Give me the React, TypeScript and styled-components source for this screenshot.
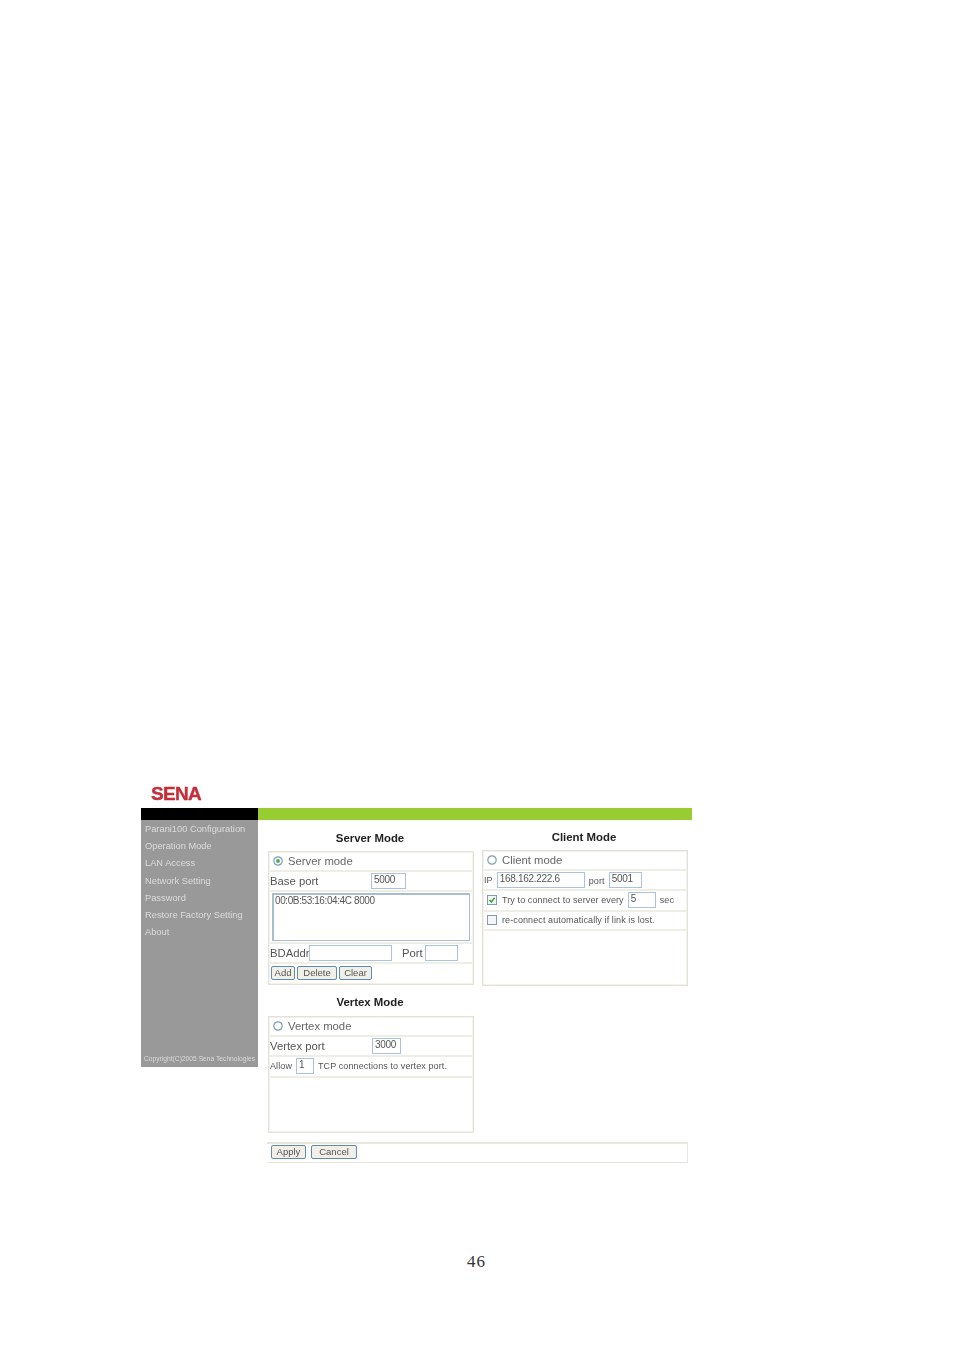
import React from 'react'
import styled, { createGlobalStyle } from 'styled-components'

const Global = createGlobalStyle`
  html,body{margin:0;padding:0;background:#fff;}
  body{font-family:"Liberation Sans",Arial,sans-serif;color:#555;}
`

const menu = [
  'Parani100 Configuration',
  'Operation Mode',
  'LAN Access',
  'Network Setting',
  'Password',
  'Restore Factory Setting',
  'About',
]

export default function App() {
  return <>
    <Global />
    <Page>
      <Shot>
        <Logo>SENA</Logo>
        <Bars>
          <BlackBar />
          <GreenBar />
        </Bars>
        <Body>
          <Sidebar>
            <Menu>
              {menu.map(m => <MenuItem key={m}>{m}</MenuItem>)}
            </Menu>
            <Copy>Copyright(C)2005 Sena Technologies</Copy>
          </Sidebar>
          <Main>
            <Columns>
              <Column>
                <Title>Server Mode</Title>
                <Panel>
                  <Row h={19}>
                    <Radio checked />
                    <BigLabel>Server mode</BigLabel>
                  </Row>
                  <Row h={20}>
                    <FieldLabel w={101}>Base port</FieldLabel>
                    <Input w={35}>5000</Input>
                  </Row>
                  <ListRow>
                    <ListBox>00:0B:53:16:04:4C 8000</ListBox>
                  </ListRow>
                  <Row h={20}>
                    <FieldLabel w={39}>BDAddr</FieldLabel>
                    <Input w={83} />
                    <PortLabel>Port</PortLabel>
                    <Input w={33} />
                  </Row>
                  <ButtonRow>
                    <Button w={24}>Add</Button>
                    <Button w={40}>Delete</Button>
                    <Button w={33}>Clear</Button>
                  </ButtonRow>
                </Panel>
                <VertexTitle>Vertex Mode</VertexTitle>
                <Panel>
                  <Row h={19}>
                    <Radio />
                    <BigLabel>Vertex mode</BigLabel>
                  </Row>
                  <Row h={20}>
                    <FieldLabel w={102}>Vertex port</FieldLabel>
                    <Input w={29}>3000</Input>
                  </Row>
                  <Row h={21}>
                    <SmallLabel>Allow</SmallLabel>
                    <Input w={18}>1</Input>
                    <TailLabel>TCP connections to vertex port.</TailLabel>
                  </Row>
                  <Filler h={53} />
                </Panel>
              </Column>
              <Column>
                <ClientTitle>Client Mode</ClientTitle>
                <Panel>
                  <Row h={19}>
                    <Radio />
                    <BigLabel>Client mode</BigLabel>
                  </Row>
                  <Row h={20}>
                    <SmallLabel>IP</SmallLabel>
                    <Input w={88}>168.162.222.6</Input>
                    <PortSmall>port</PortSmall>
                    <Input w={33}>5001</Input>
                  </Row>
                  <Row h={21}>
                    <Check checked />
                    <SmallLabel>Try to connect to server every</SmallLabel>
                    <Input w={28}>5</Input>
                    <TailLabel>sec</TailLabel>
                  </Row>
                  <Row h={19}>
                    <Check />
                    <SmallLabel>re-connect automatically if link is lost.</SmallLabel>
                  </Row>
                  <Filler h={53} />
                </Panel>
              </Column>
            </Columns>
            <Footer>
              <Button w={35}>Apply</Button>
              <FooterGap />
              <Button w={46}>Cancel</Button>
            </Footer>
          </Main>
        </Body>
      </Shot>
      <PageNumber>46</PageNumber>
    </Page>
  </>
}

function Radio({ checked }: { checked?: boolean }) {
  return <RadioMark width="10" height="10" viewBox="0 0 10 10">
    <circle cx="5" cy="5" r="4.2" fill="#fff" stroke="#7f9db9" strokeWidth="1.2" />
    {checked && <circle cx="5" cy="5" r="2" fill="#4fae5a" />}
  </RadioMark>
}

function Check({ checked }: { checked?: boolean }) {
  return <CheckMark width="10" height="10" viewBox="0 0 10 10">
    <rect x="0.5" y="0.5" width="9" height="9" fill="#f4f6f8" stroke="#7f9db9" />
    {checked && <path d="M2.5 5 L4.3 7 L7.6 2.8" fill="none" stroke="#3da63d" strokeWidth="1.5" />}
  </CheckMark>
}

const Page = styled.div`
  box-sizing:border-box;
  width:954px;
  height:1351px;
  padding:784px 0 0 141px;
  overflow:hidden;
`
const Shot = styled.div`
  width:551px;
  filter:blur(0.35px);
`
const Logo = styled.div`
  height:24px;
  line-height:19px;
  padding-left:10px;
  font-size:19px;
  font-weight:bold;
  letter-spacing:-0.7px;
  -webkit-text-stroke:0.4px #c4303a;
  color:#c4303a;
`
const Bars = styled.div`
  display:flex;
  height:12px;
`
const BlackBar = styled.div`
  width:117px;
  background:#000;
`
const GreenBar = styled.div`
  flex:1;
  background:#97cc32;
`
const Body = styled.div`
  display:flex;
  align-items:flex-start;
`
const Sidebar = styled.div`
  box-sizing:border-box;
  width:117px;
  height:247px;
  padding:0 0 3px 4px;
  background:#999;
  display:flex;
  flex-direction:column;
  justify-content:space-between;
`
const Menu = styled.div`
  display:flex;
  flex-direction:column;
`
const MenuItem = styled.div`
  height:17.2px;
  line-height:19px;
  font-size:9.3px;
  color:#dcdcdc;
  white-space:nowrap;
`
const Copy = styled.div`
  font-size:6.7px;
  line-height:10px;
  margin-left:-1px;
  color:#dcdcdc;
  white-space:nowrap;
`
const Main = styled.div`
  flex:1;
  padding-left:9px;
`
const Columns = styled.div`
  display:flex;
  gap:8px;
  padding-left:1px;
  align-items:flex-start;
`
const Column = styled.div`
  width:206px;
  display:flex;
  flex-direction:column;
`
const Title = styled.div`
  height:31px;
  line-height:37px;
  text-align:center;
  font-size:11.4px;
  font-weight:bold;
  color:#222;
  margin-right:2px;
`
const ClientTitle = styled(Title)`
  height:30px;
  line-height:35px;
`
const VertexTitle = styled(Title)`
  line-height:35px;
`
const Panel = styled.div`
  box-sizing:border-box;
  width:206px;
  border:1px solid #e4e2d6;
  box-shadow:inset 0 0 0 1px #f3f2ea;
  padding:1px;
  display:flex;
  flex-direction:column;
`
const Row = styled.div<{ h: number }>`
  box-sizing:border-box;
  height:${p => p.h}px;
  padding-bottom:1px;
  display:flex;
  align-items:center;
  border-bottom:2px solid #efeee6;
  white-space:nowrap;
`
const ListRow = styled.div`
  padding:1px 2px;
  border-bottom:2px solid #efeee6;
`
const ListBox = styled.div`
  box-sizing:border-box;
  height:48px;
  border:2px solid #a9bdd0;
  border-right-width:1px;
  border-bottom-width:1px;
  padding:0 1px;
  font-size:10px;
  line-height:12px;
  letter-spacing:-0.4px;
  color:#555;
`
const ButtonRow = styled.div`
  box-sizing:border-box;
  height:19px;
  padding:0 0 1px 1px;
  display:flex;
  align-items:center;
  gap:2px;
`
const Filler = styled.div<{ h: number }>`
  height:${p => p.h}px;
`
const RadioMark = styled.svg`
  margin:0 5px 0 3px;
  flex:none;
`
const CheckMark = styled.svg`
  margin:0 5px 0 3px;
  flex:none;
`
const BigLabel = styled.span`
  font-size:11.3px;
  color:#666;
`
const FieldLabel = styled.span<{ w: number }>`
  width:${p => p.w}px;
  flex:none;
  font-size:11.3px;
  color:#555;
`
const PortLabel = styled.span`
  width:23px;
  margin-left:10px;
  font-size:11.3px;
  color:#555;
`
const SmallLabel = styled.span`
  font-size:9px;
  color:#555;
  margin-right:4px;
  letter-spacing:0.1px;
`
const TailLabel = styled(SmallLabel)`
  margin-left:4px;
`
const PortSmall = styled(SmallLabel)`
  margin:2px 4px 0 4px;
`
const Input = styled.div<{ w: number }>`
  box-sizing:border-box;
  width:${p => p.w}px;
  height:16px;
  flex:none;
  border:1px solid #a9c4da;
  padding:0 2px;
  font-size:10px;
  line-height:12px;
  letter-spacing:-0.3px;
  color:#555;
`
const Button = styled.div<{ w: number }>`
  box-sizing:border-box;
  width:${p => p.w}px;
  height:14px;
  border:1px solid #5f8bb0;
  border-radius:2px;
  background:#f1f0e8;
  text-align:center;
  font-size:9.5px;
  line-height:11px;
  color:#555;
`
const Footer = styled.div`
  box-sizing:border-box;
  width:421px;
  height:21px;
  margin-top:9px;
  padding:0 0 2px 4px;
  border-top:2px solid #e8e7de;
  border-bottom:1px solid #e8e7de;
  border-right:1px solid #e8e7de;
  display:flex;
  align-items:center;
`
const FooterGap = styled.div`
  width:5px;
`
const PageNumber = styled.div`
  width:671px;
  margin-top:89px;
  text-align:center;
  font-family:"Liberation Serif","Noto Sans CJK KR",serif;
  font-size:17px;
  line-height:20px;
  letter-spacing:1px;
  color:#333;
`
